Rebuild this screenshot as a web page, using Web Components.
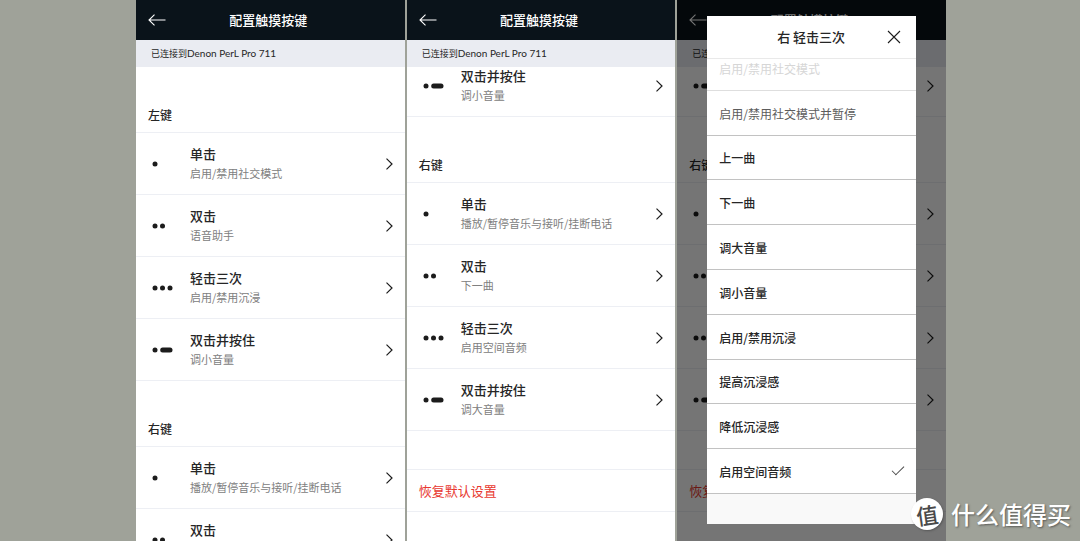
<!DOCTYPE html>
<html lang="zh-CN">
<head>
<meta charset="utf-8">
<meta name="viewport" content="width=device-width, initial-scale=1">
<title>配置触摸按键</title>
<style>
  html, body { margin: 0; height: 100%; }
  body {
    overflow: hidden;
    background: #9fa299;
    color: #262626;
    font-family: "Noto Sans CJK SC", "Noto Sans", sans-serif;
  }
</style>
</head>
<body>
<touch-board>
  <phone-screen>
    <key-section label="左键">
      <gesture-row kind="1" name="单击" action="启用/禁用社交模式"></gesture-row>
      <gesture-row kind="2" name="双击" action="语音助手"></gesture-row>
      <gesture-row kind="3" name="轻击三次" action="启用/禁用沉浸"></gesture-row>
      <gesture-row kind="hold" name="双击并按住" action="调小音量"></gesture-row>
    </key-section>
    <key-section label="右键">
      <gesture-row kind="1" name="单击" action="播放/暂停音乐与接听/挂断电话"></gesture-row>
      <gesture-row kind="2" name="双击"></gesture-row>
    </key-section>
  </phone-screen>

  <phone-screen scrolled>
    <gesture-row kind="hold" name="双击并按住" action="调小音量"></gesture-row>
    <key-section label="右键">
      <gesture-row kind="1" name="单击" action="播放/暂停音乐与接听/挂断电话"></gesture-row>
      <gesture-row kind="2" name="双击" action="下一曲"></gesture-row>
      <gesture-row kind="3" name="轻击三次" action="启用空间音频"></gesture-row>
      <gesture-row kind="hold" name="双击并按住" action="调大音量"></gesture-row>
    </key-section>
    <reset-row>恢复默认设置</reset-row>
  </phone-screen>

  <phone-screen scrolled>
    <gesture-row kind="hold"></gesture-row>
    <key-section label="右键">
      <gesture-row kind="1"></gesture-row>
      <gesture-row kind="2"></gesture-row>
      <gesture-row kind="3"></gesture-row>
      <gesture-row kind="hold"></gesture-row>
    </key-section>
    <reset-row>恢复默认设置</reset-row>
    <action-dialog slot="overlay" label="右 轻击三次">
      <action-option tone="faint">启用/禁用社交模式</action-option>
      <action-option tone="soft">启用/禁用社交模式并暂停</action-option>
      <action-option>上一曲</action-option>
      <action-option>下一曲</action-option>
      <action-option>调大音量</action-option>
      <action-option>调小音量</action-option>
      <action-option>启用/禁用沉浸</action-option>
      <action-option>提高沉浸感</action-option>
      <action-option>降低沉浸感</action-option>
      <action-option checked>启用空间音频</action-option>
    </action-dialog>
  </phone-screen>
</touch-board>
<site-mark></site-mark>

<script>
const define = (name, render) => customElements.define(name, class extends HTMLElement {
  constructor() {
    super();
    this.attachShadow({ mode: 'open' }).innerHTML = render(this);
  }
});

define('touch-board', () => `
  <style>
    :host {
      display: grid;
      grid-template-columns: repeat(3, minmax(0, 1fr));
      gap: 2px;
      height: 100%;
      padding: 0 134px 0 136px;
      box-sizing: border-box;
    }
  </style>
  <slot></slot>`);

define('phone-screen', () => `
  <style>
    :host {
      position: relative;
      display: flex;
      flex-direction: column;
      min-height: 0;
      overflow: hidden;
      background: #fff;
    }
    header {
      flex: none;
      display: grid;
      grid-template-columns: 42px 1fr 46px;
      align-items: center;
      height: 40px;
      background: #0a131a;
      color: #fff;
    }
    header button {
      display: flex;
      padding: 0 0 0 12px;
      border: 0;
      background: none;
      color: inherit;
    }
    h1 { margin: 0; font-size: 13px; line-height: 20px; font-weight: 500; text-align: center; }
    .status {
      flex: none;
      margin: 0;
      padding: 0 15px;
      background: #eaecf2;
      font-size: 9px;
      line-height: 27px;
    }
    .status span { font-family: Lato, sans-serif; font-size: 10px; }
    .view { flex: 1; min-height: 0; overflow: hidden; }
    :host([scrolled]) .list { margin-top: -12px; }
  </style>
  <header>
    <button type="button" aria-label="返回">
      <svg width="18" height="12" viewBox="0 0 18 12" fill="none" stroke="currentColor" stroke-width="1.1"><path d="M6.5.7 1 6l5.500 5.300M1 6h16.500"/></svg>
    </button>
    <h1>配置触摸按键</h1>
  </header>
  <p class="status">已连接到<span>Denon PerL Pro 711</span></p>
  <div class="view"><div class="list"><slot></slot></div></div>
  <slot name="overlay"></slot>`);

define('key-section', el => `
  <style>
    :host { display: block; }
    h2 {
      box-sizing: border-box;
      height: 66px;
      margin: 0;
      padding: 39px 12px 0;
      border-bottom: 1px solid #edeff4;
      font-size: 12px;
      line-height: 18px;
      font-weight: 500;
    }
  </style>
  <h2>${el.getAttribute('label')}</h2>
  <slot></slot>`);

const tapMarks = {
  1: '<circle cx="3" cy="3" r="2.500"/>',
  2: '<circle cx="3" cy="3" r="2.500"/><circle cx="10.500" cy="3" r="2.500"/>',
  3: '<circle cx="3" cy="3" r="2.500"/><circle cx="10.500" cy="3" r="2.500"/><circle cx="18" cy="3" r="2.500"/>',
  hold: '<circle cx="3" cy="3" r="2.500"/><rect x="8.200" y=".5" width="12.300" height="5" rx="2.500"/>'
};

define('gesture-row', el => {
  const name = el.getAttribute('name');
  const action = el.getAttribute('action');
  return `
  <style>
    :host { display: block; border-bottom: 1px solid #edeff4; }
    button {
      display: grid;
      grid-template-columns: 38px 1fr 8px;
      align-items: center;
      width: 100%;
      height: 61px;
      padding: 0 12px 0 16px;
      border: 0;
      background: none;
      color: inherit;
      font: inherit;
      text-align: left;
    }
    .text { display: grid; grid-template-rows: 19px 19px; }
    b { font-size: 13px; line-height: 18px; font-weight: 500; }
    small { font-size: 11px; line-height: 19px; color: #808080; white-space: nowrap; }
  </style>
  <button type="button" aria-label="${name || '手势'}">
    <svg width="22" height="6" viewBox="0 0 22 6" fill="#1c1c1c">${tapMarks[el.getAttribute('kind')]}</svg>
    <span class="text">${name ? `<b>${name}</b>` : ''}${action ? `<small>${action}</small>` : ''}</span>
    <svg width="8" height="12" viewBox="0 0 8 12" fill="none" stroke="#1c1c1c" stroke-width="1.200"><path d="M1.500.6 7 6l-5.500 5.400"/></svg>
  </button>`;
});

define('reset-row', () => `
  <style>
    :host { display: block; margin-top: 38px; border: solid #edeff4; border-width: 1px 0; }
    button {
      width: 100%;
      height: 41px;
      padding: 0 12px;
      border: 0;
      background: none;
      color: #e8382f;
      font: inherit;
      font-size: 13px;
      text-align: left;
    }
  </style>
  <button type="button"><slot></slot></button>`);

define('action-dialog', el => `
  <style>
    :host {
      position: absolute;
      inset: 0;
      display: flex;
      padding: 16px 30px 17px;
      background: rgba(0, 0, 0, .54);
    }
    section { flex: 1; min-width: 0; display: flex; flex-direction: column; background: #fff; }
    header {
      flex: none;
      display: grid;
      grid-template-columns: 28px 1fr 29px;
      align-items: center;
      height: 42px;
      border-bottom: 1px solid #e9e9e9;
    }
    h2 { grid-column: 2; margin: 0; font-size: 13px; line-height: 20px; font-weight: 500; text-align: center; }
    header button { display: flex; padding: 0; border: 0; background: none; color: #1c1c1c; }
    .view { flex: 1; min-height: 0; overflow: hidden; display: flex; flex-direction: column; }
    .list { flex: 1; display: flex; flex-direction: column; margin-top: -13px; }
    footer { flex: none; height: 30px; background: #f9f9f9; }
  </style>
  <section role="dialog" aria-label="${el.getAttribute('label')}">
    <header>
      <h2>${el.getAttribute('label')}</h2>
      <button type="button" aria-label="关闭">
        <svg width="14" height="14" viewBox="0 0 14 14" fill="none" stroke="currentColor" stroke-width="1.100"><path d="m1 1 12 12M13 1 1 13"/></svg>
      </button>
    </header>
    <div class="view"><div class="list"><slot></slot></div></div>
    <footer></footer>
  </section>`);

define('action-option', el => `
  <style>
    :host { flex: 1; display: flex; border-bottom: 1px solid #c2c2c2; }
    :host([tone="soft"]) { color: #5c5c5c; }
    :host([tone="faint"]) { color: #d6d6d6; border-color: #dedede; }
    label {
      flex: 1;
      display: flex;
      align-items: center;
      justify-content: space-between;
      padding: 2px 12px 0;
      font-size: 12px;
      line-height: 18px;
      font-weight: 500;
    }
    :host([tone]) label { font-weight: 400; }
    input { appearance: none; display: grid; width: 12px; height: 12px; margin: 0; }
    input:checked::before {
      content: "";
      width: 12px;
      height: 6px;
      box-sizing: border-box;
      border: solid #484848;
      border-width: 0 0 1px 1px;
      transform: rotate(-45deg);
    }
  </style>
  <label><slot></slot><input type="radio" ${el.hasAttribute('checked') ? 'checked' : ''}></label>`);

define('site-mark', () => `
  <style>
    :host {
      position: absolute;
      right: 9px;
      bottom: 9px;
      display: flex;
      align-items: center;
      gap: 8px;
      color: #fff;
      font-size: 24px;
      line-height: 36px;
      font-weight: 500;
      text-shadow: 1px 1px 2px rgba(60, 60, 60, .7);
    }
    .seal {
      display: grid;
      place-items: center;
      width: 32px;
      height: 32px;
      border-radius: 50%;
      background: #fff;
      color: #4a4a4a;
      font-size: 22px;
      line-height: 32px;
      text-shadow: none;
      box-shadow: 1px 1px 2px rgba(60, 60, 60, .5);
    }
    .seal span { transform: rotate(-8deg); }
  </style>
  <span class="seal"><span>值</span></span><span>什么值得买</span>`);
</script>
</body>
</html>
